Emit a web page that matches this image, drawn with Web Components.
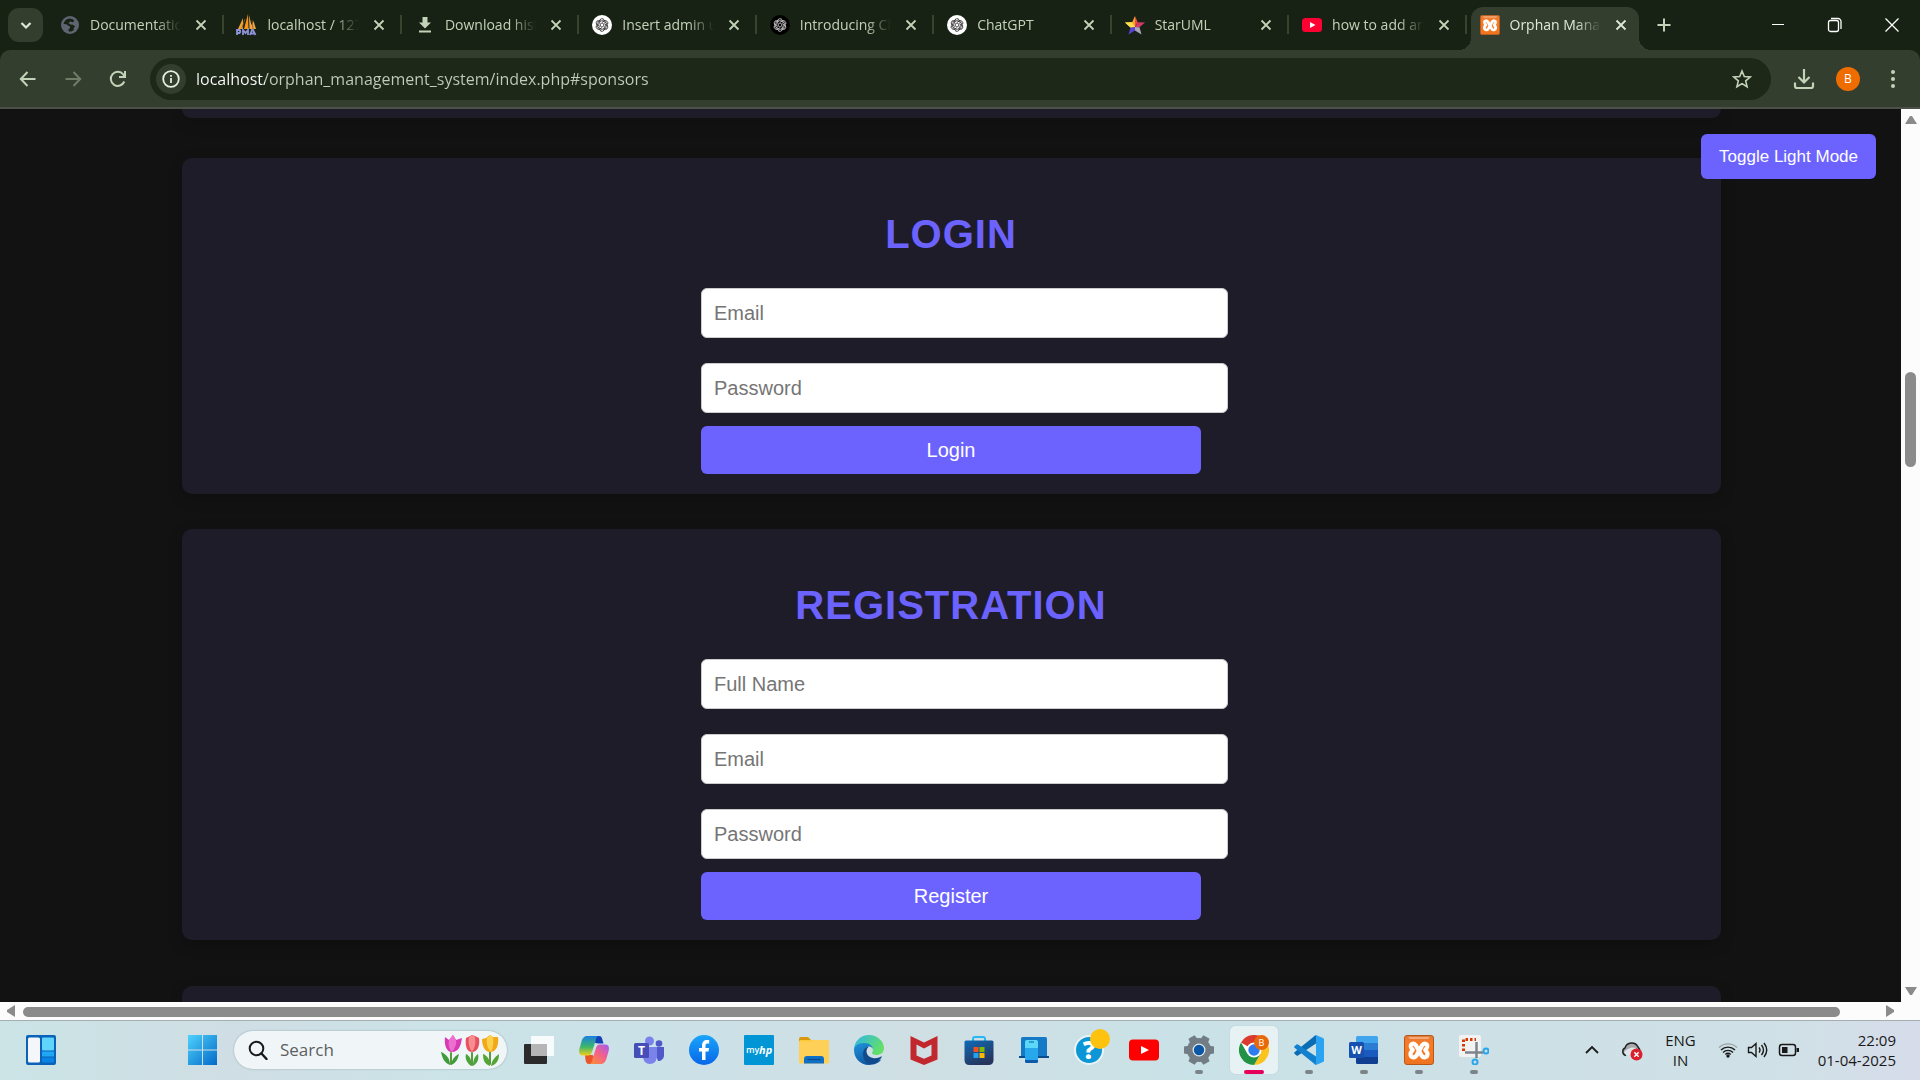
<!DOCTYPE html>
<html lang="en">
<head>
<meta charset="utf-8">
<title>Orphan Management System</title>
<style>
html, body { margin: 0; height: 100%; overflow: hidden; }
body { display: flex; flex-direction: column; background: #121212; font-family: "Open Sans", "Noto Sans", sans-serif; }
</style>
</head>
<body>
<tab-strip>
  <browser-tab icon="globe">Documentation</browser-tab>
  <browser-tab icon="pma">localhost / 127.0.0.1</browser-tab>
  <browser-tab icon="dlfile">Download history</browser-tab>
  <browser-tab icon="gpt">Insert admin user</browser-tab>
  <browser-tab icon="gptdark">Introducing ChatGPT</browser-tab>
  <browser-tab icon="gpt">ChatGPT</browser-tab>
  <browser-tab icon="star">StarUML</browser-tab>
  <browser-tab icon="yt">how to add an image</browser-tab>
  <browser-tab icon="xampp" active>Orphan Management</browser-tab>
</tab-strip>
<browser-toolbar></browser-toolbar>
<page-view>
  <form-card class="above"></form-card>
  <form-card heading="Login" action="Login" fields="Email,Password"></form-card>
  <form-card heading="Registration" action="Register" fields="Full Name,Email,Password"></form-card>
  <form-card class="below"></form-card>
</page-view>
<task-bar>
  <task-app slot="start" icon="widgets" name="Widgets"></task-app>
  <task-app slot="menu" icon="win" name="Start"></task-app>
  <task-app icon="taskview" name="Task view"></task-app>
  <task-app icon="copilot" name="Copilot"></task-app>
  <task-app icon="teams" name="Teams"></task-app>
  <task-app icon="facebook" name="Facebook"></task-app>
  <task-app icon="myhp" name="myHP"></task-app>
  <task-app icon="folder" name="File Explorer"></task-app>
  <task-app icon="edge" name="Edge"></task-app>
  <task-app icon="mcafee" name="McAfee"></task-app>
  <task-app icon="store" name="Store"></task-app>
  <task-app icon="phone" name="Phone Link"></task-app>
  <task-app icon="help" name="Support"></task-app>
  <task-app icon="ytbig" name="YouTube"></task-app>
  <task-app icon="gear" name="Settings" running></task-app>
  <task-app icon="chrome" name="Chrome" running current></task-app>
  <task-app icon="vscode" name="VS Code" running></task-app>
  <task-app icon="word" name="Word" running></task-app>
  <task-app icon="xamppbig" name="XAMPP" running></task-app>
  <task-app icon="snip" name="Snipping Tool" running></task-app>
</task-bar>
<script>
const gptMark = (stroke) => {
  let s = '';
  for (let i = 0; i < 6; i++) s += `<path transform="rotate(${i * 60} 10 10)" d="M7.6 8.7V6.2a2.5 2.5 0 0 1 4.6-1.4M7.6 6.9l3.5-2 2.6 1.5" />`;
  return `<g fill="none" stroke="${stroke}" stroke-width=".65">${s}<path d="M10 8l1.8 1v2L10 12l-1.8-1V9z"/></g>`;
};
const xampp = `<defs><linearGradient id="xg" x2="0" y2="1"><stop stop-color="#e07a3a"/><stop offset=".3" stop-color="#fb7a24"/><stop offset="1" stop-color="#ef7420"/></linearGradient></defs>
<rect x=".5" y=".5" width="29" height="29" rx="2.500" fill="url(#xg)" stroke="#b5581a"/><path d="M4 2h22l-2 2H6z" fill="#f9c9a4" opacity=".6"/>
<g fill="none" stroke="#fff" stroke-width="4.200" stroke-linecap="round" stroke-linejoin="round"><path d="M12 10.500C10 7.500 6.500 8.500 6.800 11.500c.2 1.500 1 2.300 2 3.500-1 1.200-2.300 2-2.300 4 0 3.500 4 4.500 6 1.500L18 10.500c2-3 5.500-2 5.200 1-.2 1.500-1 2.300-2 3.500 1 1.200 2.300 2 2.300 4 0 3.500-4 4.500-6 1.500z"/></g>`;
const ICONS = {
  globe: [20, 20, `<circle cx="10" cy="10" r="9" fill="#5f6470"/><path d="M9.500 3.500c-3 .3-5.500 2.500-6 5.500l3 .3 2.200 1.700c1.500 0 1.500 1 1.300 2.200l-1.600 1 .4 2.300c2 .3 3.400-.3 4.800-1.300l.2-2.400 1.300-1.500-2.300-1.500-2.500-.2-1.800-1.500 1.800-1.500 2.700.6 1.300-1.300-1.300-1.700z" fill="#182214"/>`],
  pma: [22, 22, `<path d="M7 4L2 15h5z" fill="#f0a030"/><path d="M12 0L8 15h4.500z" fill="#f7941d"/><path d="M13 1l.5 14H20L17.500 7l-2 4z" fill="#f2a541"/><path d="M9 5L6 14M16 6l1 9" stroke="#7c5a2a" stroke-width=".8"/><path d="M1 21v-5h2.500q1.500 1.500 0 3H1.500M7 21v-5l2.500 3 2.500-3v5M14 21l2-5 1 0 2.500 5M15 19.500h4" fill="none" stroke="#8c93d8" stroke-width="1.800"/>`],
  dlfile: [20, 20, `<path d="M7.500 2h5v5.500H16L10 13.500 4 7.500h3.500zM4 15.500h12v2H4z" fill="#c2d3b8"/>`],
  gpt: [20, 20, `<circle cx="10" cy="10" r="10" fill="#fff"/>${gptMark('#000')}`],
  gptdark: [20, 20, `<circle cx="10" cy="10" r="10" fill="#000"/>${gptMark('#fff')}`],
  star: [20, 20, `<path d="M10 1L7.300 7.200 0 7.500l5.500 5z" fill="#ffd43b"/><path d="M10 1v11L5.500 12.500 7.300 7.200z" fill="#f5a623"/><path d="M10 1l2.700 6.200L10 12z" fill="#ef4a4a"/><path d="M12.700 7.200l7.300.3-5.500 4.800L10 12z" fill="#d13a68"/><path d="M5.500 12.500L3.500 19.500 10 15.500V12z" fill="#5b3fd6"/><path d="M10 12v3.500l6.500 4-2-7.200z" fill="#a9a6b8"/><path d="M0 7.500l7-.3L10 12l-4.500.5z" fill="#ffdf4d"/>`],
  yt: [20, 20, `<rect y="3" width="20" height="14" rx="3.500" fill="#ff0033"/><path d="M8 7l5.500 3L8 13z" fill="#fff"/>`],
  xampp: [20, 20, `<g transform="scale(.667)">${xampp}</g>`],
  close: [14, 14, `<path d="M2.500 2.500l9 9M11.500 2.500l-9 9" stroke="currentColor" stroke-width="1.800"/>`],
  chevron: [14, 14, `<path d="M2.500 5l4.500 4.500L11.500 5" fill="none" stroke="currentColor" stroke-width="2.200"/>`],
  plus: [16, 16, `<path d="M8 1.500v13M1.500 8h13" stroke="currentColor" stroke-width="2"/>`],
  min: [14, 14, `<path d="M1 6.500h12" stroke="currentColor"/>`],
  restore: [16, 16, `<rect x="1.500" y="3.500" width="10" height="11" rx="2" fill="none" stroke="currentColor" stroke-width="1.300"/><path d="M4 1.500h7a3 3 0 0 1 3 3V12" fill="none" stroke="currentColor" stroke-width="1.300"/>`],
  winclose: [16, 16, `<path d="M1.500 1.500l13 13M14.500 1.500l-13 13" stroke="currentColor" stroke-width="1.300"/>`],
  back: [20, 20, `<path d="M17.500 10H3M9.500 3L2.800 10l6.700 7" fill="none" stroke="currentColor" stroke-width="2"/>`],
  forward: [20, 20, `<path d="M2.500 10H17M10.500 3l6.700 7-6.700 7" fill="none" stroke="currentColor" stroke-width="2"/>`],
  reload: [20, 20, `<path d="M16.300 12.500A7 7 0 1 1 15.300 5.500L17 7.300" fill="none" stroke="currentColor" stroke-width="2"/><path d="M17 2v6h-6" fill="none" stroke="currentColor" stroke-width="2"/>`],
  info: [20, 20, `<circle cx="10" cy="10" r="7.800" fill="none" stroke="currentColor" stroke-width="1.800"/><path d="M10 9v5M10 6v1.800" stroke="currentColor" stroke-width="1.800"/>`],
  fav: [20, 20, `<path d="M10 2l2.300 5.500 5.900.5-4.500 3.900 1.400 5.800L10 14.600l-5.100 3.100 1.400-5.800L1.800 8l5.900-.5z" fill="none" stroke="currentColor" stroke-width="1.600"/>`],
  download: [22, 22, `<path d="M11 1v13M5.500 9l5.500 5.500L16.500 9M2 14.500V18a2 2 0 0 0 2 2h14a2 2 0 0 0 2-2v-3.500" fill="none" stroke="currentColor" stroke-width="2.200"/>`],
  dots: [20, 20, `<g fill="currentColor"><circle cx="10" cy="3" r="2"/><circle cx="10" cy="10" r="2"/><circle cx="10" cy="17" r="2"/></g>`],
  widgets: [30, 30, `<rect width="30" height="30" rx="2" fill="#0a63b8"/><rect x="2" y="2.500" width="12" height="25" rx="1.500" fill="#f4f6f9"/><rect x="16" y="2.500" width="12" height="13" rx="1" fill="#60d5fb"/><rect x="16" y="16.500" width="12" height="5" fill="#1fa6f5"/><rect x="16" y="22.500" width="12" height="5" rx="1" fill="#0a84e4"/>`],
  win: [30, 30, `<defs><linearGradient id="w" gradientUnits="userSpaceOnUse" x2="30" y2="30"><stop stop-color="#4fd4fc"/><stop offset="1" stop-color="#0369c9"/></linearGradient></defs><path d="M1 0h14v14.500H1zM16 0h14v14.500H16zM1 15.500h14V30H1zM16 15.500h14V30H16z" fill="url(#w)"/>`],
  search: [20, 20, `<circle cx="8.500" cy="8.500" r="6.800" fill="none" stroke="currentColor" stroke-width="2"/><path d="M13.500 13.500l5 5.500" stroke="currentColor" stroke-width="2.400" stroke-linecap="round"/>`],
  tulips: [60, 32, `<g fill="none" stroke-linecap="round"><path d="M11 19v11M32 19v12M50 18v12" stroke="#5b9a3a" stroke-width="2"/></g>
   <path d="M10 31C4 29 2 23 1 18c5 2 9 6 9 13zM11 31c1-6 4-9 8-11-1 5-3 9-8 11z" fill="#3f9a3c"/><path d="M31 32c-5-4-6-8-5-12 4 2 6 6 5 12zM33 32c0-6 2-10 5-12 1 5 0 9-5 12z" fill="#4ca33c"/><path d="M50 32c-6-2-7-7-7-12 5 2 7 6 7 12zM51 32c1-6 4-9 8-12 0 6-2 10-8 12z" fill="#55a436"/>
   <path d="M5 3l4 3 4-5 3 5 6-2c-1 7-3 14-10 14C6 18 4 10 5 3z" fill="#d63bb4"/><path d="M9 6c-1 5 0 9 3 12 3-4 5-8 4-12l-3-5z" fill="#ee6fd0"/>
   <path d="M26 4l4-2 2-1 3 1 4 2c1 7-1 14-7 14s-7-8-6-14z" fill="#e8505f"/><path d="M29 3c-1 6 0 11 3 15 3-4 4-9 3-15l-3-2z" fill="#f68d8f"/>
   <path d="M42 5l4-1 4-3 3 2 5 0c1 7-1 15-8 15-5 0-8-6-8-13z" fill="#f2a917"/><path d="M47 4c-1 6 1 11 4 14 2-4 3-10 2-15l-3-2z" fill="#fcd04f"/>`],
  taskview: [30, 30, `<rect y="9" width="23" height="20" rx="1" fill="#2b2b2b"/><rect x="7" y="1" width="23" height="20" rx="1" fill="#fff" opacity=".85"/><rect x="7" y="9" width="16" height="12" fill="#b5b5b5"/>`],
  copilot: [30, 30, `<defs><linearGradient id="c1" x2="0" y2="1"><stop stop-color="#1b7fe0"/><stop offset=".55" stop-color="#3cb66a"/><stop offset="1" stop-color="#f1d01c"/></linearGradient><linearGradient id="c2" x1="1" x2=".2" y2="1"><stop stop-color="#a05cf5"/><stop offset=".5" stop-color="#f2608c"/><stop offset="1" stop-color="#fb8a3c"/></linearGradient></defs>
   <path d="M17 1h3c2.500 0 3 2 3.500 4l1 3.500h-5c-3 0-4-1-5-4z" fill="#1640b8"/><path d="M14 29h-4c-2.500 0-3-2-3.500-4L6 20h6c3 0 3 2 3.500 5z" fill="#e8562a"/>
   <path d="M20 1c-2.500 0-3 3-3.500 5L13 17c-.8 2.500-2 3.500-4 3.500H4c-4 0-4.500-3-3.500-7l2-7C3.500 3 5 1 9 1z" fill="url(#c1)"/><path d="M10 29c2.500 0 3-3 3.500-5L17 13c.8-2.500 2-3.500 4-3.500h5c4 0 4.500 3 3.500 7l-2 7c-1 3.500-2.500 5.500-6.500 5.500z" fill="url(#c2)"/>`],
  teams: [30, 30, `<circle cx="25" cy="8.500" r="3.300" fill="#5059c9"/><path d="M19 12h11v8c0 4-3 6-6 6z" fill="#5059c9"/><circle cx="15.500" cy="6" r="4.500" fill="#7b83eb"/><path d="M10 12h13v9c0 5-3 8-7 8s-7-3-7-8z" fill="#7b83eb"/><rect y="8" width="15" height="15" rx="1.500" fill="#464eb8"/><text x="7.500" y="20" text-anchor="middle" font-family="Open Sans" font-weight="700" font-size="12" fill="#fff">T</text>`],
  facebook: [30, 30, `<defs><linearGradient id="f" x2="0" y2="1"><stop stop-color="#19a5fb"/><stop offset="1" stop-color="#0866e8"/></linearGradient></defs><circle cx="15" cy="15" r="15" fill="url(#f)"/><path d="M13 25v-8.500h-3V13h3v-2.500c0-3.500 2-5.500 5-5.500h2.200v3.500h-2c-1.200 0-1.700.8-1.700 2V13h3.600l-.6 3.500h-3V25z" fill="#fff"/>`],
  myhp: [30, 30, `<rect width="30" height="30" rx="1" fill="#0096d6"/><text x="2" y="18" font-family="Open Sans" font-weight="600" font-size="9" fill="#fff">my</text><text x="15" y="19" font-family="Open Sans" font-weight="700" font-style="italic" font-size="11" fill="#fff">hp</text>`],
  folder: [30, 30, `<path d="M0 4q0-2 2-2h7l4 4v4H0z" fill="#d9970a"/><rect y="5" width="30" height="23" rx="1.500" fill="#ffc93c"/><path d="M0 8q0-1.500 1.500-1.500H12L14 5h14.500Q30 5 30 6.500V27q0 1.500-1.500 1.500h-27Q0 28.500 0 27z" fill="#fed057"/><path d="M5 28.500V24q0-3 3-3h14q3 0 3 3v4.500z" fill="#0f6fc4"/><path d="M8.500 24.500h13" stroke="#0a4a8a" stroke-width="1.200"/>`],
  edge: [30, 30, `<defs><linearGradient id="e1" y1="0" y2=".5"><stop stop-color="#2fb4ea"/><stop offset="1" stop-color="#62e067"/></linearGradient><linearGradient id="e2" x2=".6" y2="1"><stop stop-color="#1f96dc"/><stop offset="1" stop-color="#0c4f9c"/></linearGradient></defs>
   <path d="M0 15C0 6 7 0 15 0s15 6 15 13c0 5-4 7-7.500 7-2.500 0-4.500-1-4.500-2 0-.7 1-1.200 1-3 0-3-3-5-6-5C6 10 0 15 0 15z" fill="url(#e1)"/><path d="M0 15c0-4 4-7 10-7 6 0 9 3.500 9 7 0-2-2-3.500-4-3.500-5 0-7 10 3 14 4 1.200 8-.5 9.500-1.200C25 28 20 30 15 30 6 30 0 23 0 15z" fill="url(#e2)"/><path d="M9 19c0-4 3-7.500 6-7.500-4 3-3.500 10 4 11.500 3 .6 6-.3 8-1.500.8-.3 1 .3.500 1C25 26 21 29 17 29c-5 0-8-5-8-10z" fill="#114a8b"/>`],
  mcafee: [30, 30, `<path d="M1.500 1L15 7.500 28.500 1v23.500L15 30 1.500 24.500zM7.500 9.500v11L15 23.800l7.500-3.300v-11L15 13.500z" fill="#c1282d" fill-rule="evenodd"/>`],
  store: [30, 30, `<defs><linearGradient id="s" x2=".5" y2="1"><stop stop-color="#0f6bb8"/><stop offset="1" stop-color="#26355e"/></linearGradient></defs><path d="M9 8V4q0-2 2-2h8q2 0 2 2v4" fill="none" stroke="#29b7f2" stroke-width="2"/><path d="M.5 7q0-1.500 1.500-1.500h26q1.500 0 1.500 1.500v18q0 5-5 5h-19q-5 0-5-5z" fill="url(#s)"/><path d="M9.500 12h5v5h-5z" fill="#f25022"/><path d="M15.500 12h5v5h-5z" fill="#7fba00"/><path d="M9.500 18h5v5h-5z" fill="#1ea4ef"/><path d="M15.500 18h5v5h-5z" fill="#ffb900"/>`],
  phone: [30, 30, `<rect x="2" y="2" width="26" height="20" rx="1.500" fill="#157ac6"/><path d="M0 21h30v2H0z" fill="#0a4d8c"/><rect x="6" y="5" width="13" height="23" rx="1.500" fill="#0f5aa8"/><path d="M6 6.500Q6 5 7.500 5h10Q19 5 19 6.500V15H6z" fill="#5bd7f8"/><path d="M6 13h13v12H6z" fill="#28a8ec"/><path d="M10 7h5" stroke="#0f5aa8"/>`],
  help: [36, 36, `<circle cx="15" cy="21" r="15" fill="#e9f3f7"/><circle cx="15" cy="21" r="13" fill="#0d96d6"/><text x="15" y="30" text-anchor="middle" font-family="Open Sans" font-weight="800" font-size="25" fill="#fff">?</text><circle cx="26" cy="10" r="10" fill="#ffc20e"/>`],
  ytbig: [30, 30, `<rect y="4.500" width="30" height="21" rx="4" fill="#f00"/><path d="M12 11l8 4-8 4z" fill="#fff"/>`],
  gear: [30, 30, `<g transform="translate(15 15)" fill="#727c85">${[0, 60, 120, 180, 240, 300].map(a => `<path transform="rotate(${a + 30})" d="M-4.500-9L-3.500-15h7l1 6z"/>`).join('')}<circle r="12"/></g><circle cx="15" cy="15" r="6.500" fill="#dfe6ea"/><circle cx="15" cy="15" r="5.200" fill="#0c57a5"/>`],
  chrome: [30, 30, `<circle cx="15" cy="15" r="15" fill="#fff"/><path d="M15 15L2 7.500A15 15 0 0 1 28 7.500H15z" fill="#db3a2f"/><path d="M15 7.500h13A15 15 0 0 1 15 30l6.500-11.200z" fill="#fcc31e"/><path d="M2 7.500A15 15 0 0 0 15 30l6.500-11.200-13 0z" fill="#229344"/><circle cx="15" cy="15" r="7.500" fill="#fff"/><circle cx="15" cy="15" r="5.700" fill="#2f7bf0"/><circle cx="22.500" cy="7.500" r="7.500" fill="#e8690b"/><text x="22.500" y="11" text-anchor="middle" font-family="Open Sans" font-size="9" fill="#fff">B</text>`],
  vscode: [30, 30, `<path d="M22 30L1 12.500 0 12v1.500L1.500 15 22 23z" fill="none"/><path d="M22 0v8.500L4 20.500q-.8.500-1.500 0L.5 18.700q-.7-.7 0-1.400L20.500 1z" fill="#0a6cb5"/><path d="M22 30v-8.500L4 9.500q-.8-.5-1.500 0L.5 11.300q-.7.700 0 1.400L20.500 29z" fill="#1180ce"/><path d="M22 0l7 3q1 .5 1 1.500v21q0 1-1 1.500l-7 3c-.8 0-1.500-.5-1.500-1 1 .5 1.500 0 1.500-1V2c0-1-.5-1.500-1.500-1 0-.5.700-1 1.500-1z" fill="#2aa4f2"/>`],
  word: [30, 30, `<path d="M7 2.500Q7 1 8.500 1h19Q29 1 29 2.500V8H7z" fill="#41a5ee"/><path d="M7 8h22v7H7z" fill="#2b7cd3"/><path d="M7 15h22v7H7z" fill="#185abd"/><path d="M7 22h22v5.500q0 1.500-1.500 1.500h-19Q7 29 7 27.500z" fill="#103f91"/><rect y="7" width="15" height="16" rx="1.500" fill="#1850b0"/><text x="7.500" y="19" text-anchor="middle" font-family="Open Sans" font-weight="700" font-size="11" fill="#fff">W</text>`],
  xamppbig: [30, 30, xampp],
  snip: [30, 30, `<rect width="22" height="22" rx="2" fill="#f2f2f3"/><path d="M4.500 16V4.500H17" fill="none" stroke="#d83b01" stroke-width="3" stroke-dasharray="2.500 2"/><path d="M17.500 7v16M6 17.500h18" stroke="#7d858c" stroke-width="2.500"/><circle cx="27" cy="16" r="2.500" fill="none" stroke="#2aa6e8" stroke-width="2"/><circle cx="16" cy="27" r="2.500" fill="none" stroke="#2aa6e8" stroke-width="2"/>`],
  up: [14, 14, `<path d="M1 10l6-6 6 6" fill="none" stroke="currentColor" stroke-width="1.800"/>`],
  cloud: [22, 22, `<path d="M5 16.500a4 4 0 0 1-1-7.500A7 7 0 0 1 17 8l2 3" fill="#a7a9aa" stroke="#222" stroke-width="1.500"/><path d="M3 13q6-6 12-4l-4 7H5z" fill="#dfe5e8"/><circle cx="15.500" cy="15.500" r="6" fill="#d9202c"/><path d="M13.300 13.300l4.400 4.400M17.700 13.300l-4.400 4.400" stroke="#fff" stroke-width="1.400"/>`],
  wifi: [20, 20, `<g fill="none" stroke="currentColor" stroke-width="1.400"><path d="M1 7.500a13 13 0 0 1 18 0" opacity=".3"/><path d="M3 10a10 10 0 0 1 14 0M5 12.500a7 7 0 0 1 10 0M7.300 14.500a4 4 0 0 1 5.400 0"/></g><circle cx="10" cy="16" r="1.700" fill="currentColor"/>`],
  sound: [22, 20, `<g fill="none" stroke="currentColor" stroke-width="1.400"><path d="M1.500 7.500h3L9 3.500v13l-4.500-4h-3zM12 7.500q2 2.500 0 5M14.500 5q4 5 0 10M17 3q5.500 7 0 14"/></g>`],
  battery: [22, 20, `<rect x="1.500" y="4.500" width="16" height="11" rx="2.500" fill="none" stroke="currentColor" stroke-width="1.500"/><path d="M4 7h5.500v6H4zM18.500 8H21v4h-2.500z" fill="currentColor"/>`]
};

class Base extends HTMLElement {
  connectedCallback() {
    if (this.shadowRoot) return;
    this.attachShadow({ mode: 'open' }).innerHTML = this.view();
  }
}
const RESET = `*{box-sizing:border-box} button{border:0;padding:0;background:none;color:inherit;font:inherit;display:flex;align-items:center;justify-content:center} input{border:0;outline:0;min-width:0}`;

customElements.define('app-icon', class extends Base {
  view() {
    const [w, h, body] = ICONS[this.getAttribute('name')];
    return `<style>:host{display:block;flex:none;width:${w}px;height:${h}px}svg{display:block}</style><svg width="${w}" height="${h}" viewBox="0 0 ${w} ${h}" aria-hidden="true">${body}</svg>`;
  }
});

customElements.define('browser-tab', class extends Base {
  view() {
    return `<style>${RESET}
    :host{position:relative;display:flex;flex:1 1 0;min-width:0;height:50px;align-items:center;gap:10px;padding:0 13px;box-sizing:border-box;font-size:14px;line-height:20px;color:#c2d3b8}
    :host::after{content:"";position:absolute;right:0;top:15px;width:2px;height:19px;background:#37442f}
    .fav{width:20px;display:flex;justify-content:center}
    .t{flex:1;min-width:0;overflow:hidden;white-space:nowrap;-webkit-mask:linear-gradient(90deg,#000 72%,transparent);mask:linear-gradient(90deg,#000 72%,transparent)}
    .x{width:20px;height:20px}
    .bg{display:none}
    :host([active]){color:#e1e8da}
    :host([active])::after{display:none}
    :host([active]) .bg{display:block;position:absolute;z-index:-1;left:4px;right:5px;top:7px;bottom:0;background:#333e2e;border-radius:12px 12px 0 0}
    .bg::before,.bg::after{content:"";position:absolute;bottom:0;width:12px;height:12px}
    .bg::before{right:100%;background:radial-gradient(circle at 0 0,transparent 12px,#333e2e 12px)}
    .bg::after{left:100%;background:radial-gradient(circle at 100% 0,transparent 12px,#333e2e 12px)}
    </style><span class="bg"></span><span class="fav"><app-icon name="${this.getAttribute('icon')}"></app-icon></span><span class="t"><slot></slot></span><button class="x" aria-label="Close tab"><app-icon name="close"></app-icon></button>`;
  }
});

customElements.define('tab-strip', class extends Base {
  view() {
    return `<style>${RESET}
    :host{display:flex;flex:none;align-items:center;height:50px;background:#182214;color:#fff}
    .find{width:35px;height:34px;margin:0 4px 0 8px;border-radius:11px;background:#333e2e;color:#dfe8d8;flex:none}
    .tabs{display:flex;flex:1;min-width:0;position:relative;z-index:0}
    .new{width:40px;height:34px;color:#c2d3b8}
    .win{display:flex;margin-left:65px}.win button{width:57px;height:50px}
    </style><button class="find" aria-label="Search tabs"><app-icon name="chevron"></app-icon></button>
    <div class="tabs"><slot></slot></div><button class="new" aria-label="New tab"><app-icon name="plus"></app-icon></button>
    <div class="win"><button aria-label="Minimize"><app-icon name="min"></app-icon></button><button aria-label="Restore"><app-icon name="restore"></app-icon></button><button aria-label="Close"><app-icon name="winclose"></app-icon></button></div>`;
  }
});

customElements.define('browser-toolbar', class extends Base {
  view() {
    return `<style>${RESET}
    :host{display:block;flex:none;background:#182214}
    .bar{display:flex;align-items:center;height:59px;padding:0 5px;background:#333e2e;border-bottom:2px solid #4b5148;border-radius:10px 10px 0 0;color:#c2d3b8}
    .nav{width:45px;height:42px}.off{color:#6f7c68}
    .omni{flex:1;display:flex;align-items:center;gap:10px;height:42px;margin:0 10px;padding:0 19px 0 6px;border-radius:21px;background:#1e2819}
    .info{width:30px;height:30px;border-radius:15px;background:#333e2e;color:#e8eee2}
    .url{flex:1;height:30px;padding:0;font:16px/30px "Open Sans","Noto Sans",sans-serif;color:transparent;background:linear-gradient(90deg,#fff 69px,#c3cbbb 69px);-webkit-background-clip:text;background-clip:text}
    .me{width:24px;height:24px;border-radius:50%;background:#ef6c00;color:#fff;font-size:12px;margin:0 10px}
    </style><div class="bar"><button class="nav" aria-label="Back"><app-icon name="back"></app-icon></button><button class="nav off" aria-label="Forward"><app-icon name="forward"></app-icon></button><button class="nav" aria-label="Reload"><app-icon name="reload"></app-icon></button>
    <div class="omni"><button class="info" aria-label="Site information"><app-icon name="info"></app-icon></button><input class="url" type="text" aria-label="Address" value="localhost/orphan_management_system/index.php#sponsors"><button aria-label="Bookmark"><app-icon name="fav"></app-icon></button></div>
    <button class="nav" aria-label="Downloads"><app-icon name="download"></app-icon></button><button class="me" aria-label="Profile">B</button><button class="nav" aria-label="Menu"><app-icon name="dots"></app-icon></button></div>`;
  }
});

customElements.define('scroll-bar', class extends Base {
  view() {
    const [a, b, c] = this.getAttribute('spans').split(',');
    const tri = this.hasAttribute('horizontal')
      ? ['M9 1v12L1 8V6z', 'M0 1v12l8-5V6z', 9, 14, 'row', '0 6px', '5px 0 3px'] : ['M1 9h12L8 1H6z', 'M1 0h12L8 8H6z', 14, 9, 'column', '6px 0', '0 4px'];
    const svg = p => `<svg width="${tri[2]}" height="${tri[3]}" viewBox="0 0 ${tri[2]} ${tri[3]}"><path d="${p}" fill="#8b8b8b"/></svg>`;
    return `<style>:host{display:flex;flex-direction:${tri[4]};align-items:center;padding:${tri[5]};box-sizing:border-box;background:#fcfcfc;min-width:0;min-height:0}svg{flex:none;display:block}
    .track{flex:1;align-self:stretch;display:flex;flex-direction:${tri[4]};padding:${tri[6]};margin:${this.hasAttribute('horizontal') ? '0 8px' : '4px 0'}}
    .track div:nth-child(1){flex:${a} 0 0}.thumb{flex:${b} 0 0;border-radius:6px;background:#8b8b8b;min-width:10px}.track div:nth-child(3){flex:${c} 0 0}</style>${svg(tri[0])}<div class="track"><div></div><div class="thumb"></div><div></div></div>${svg(tri[1])}`;
  }
});

customElements.define('page-view', class extends Base {
  view() {
    return `<style>${RESET}
    :host{flex:1;min-height:0;display:grid;grid-template:minmax(0,1fr) 18px / minmax(0,1fr) 19px;background:#fcfcfc;font-family:"Liberation Sans",Arial,sans-serif}
    .doc{position:relative;overflow:hidden;display:flex;flex-direction:column;align-items:center;padding-left:1px;background:#121212}
    .mode{position:absolute;z-index:2;top:25px;right:25px;padding:13px 18px;border-radius:6px;background:#6c63ff;color:#fff;font-size:17px;line-height:19px}
    </style><div class="doc"><slot></slot><button class="mode">Toggle Light Mode</button></div><scroll-bar spans="244,95,516"></scroll-bar><scroll-bar horizontal spans="0,1817,38"></scroll-bar>`;
  }
});

customElements.define('form-card', class extends Base {
  view() {
    const style = `<style>${RESET}
    :host{display:block;box-sizing:border-box;flex:none;width:81%;margin-bottom:35px;padding:53px 20px 20px;border-radius:10px;background:#1f1c2a;box-shadow:0 5px 15px rgba(0,0,0,.2)}
    :host([heading="Registration"]){margin-bottom:46px}
    :host(.above){height:9px;padding:0;border-radius:0 0 10px 10px;margin-bottom:40px}
    :host(.below){flex:1;padding:0;margin:0;border-radius:10px 10px 0 0}
    h2{margin:0 0 31px;font-size:40px;line-height:46px;letter-spacing:1px;text-align:center;text-transform:uppercase;color:#6c63ff}
    form{display:flex;flex-direction:column;width:500px;margin:0 auto;font-size:20px}
    input{width:calc(100% + 27px);height:50px;margin-bottom:25px;padding:0 12px;border:1px solid #ccc;border-radius:6px;background:#fff;font:20px/24px "Liberation Sans",Arial,sans-serif}
    input::placeholder{color:#757575}
    input:last-of-type{margin-bottom:13px}
    button{height:48px;border-radius:6px;background:#6c63ff;color:#fff}
    </style>`;
    if (!this.hasAttribute('heading')) return style;
    const inputs = this.getAttribute('fields').split(',').map(f => `<input type="${f === 'Password' ? 'password' : f === 'Email' ? 'email' : 'text'}" placeholder="${f}" aria-label="${f}">`).join('');
    return `${style}<h2>${this.getAttribute('heading')}</h2><form>${inputs}<button type="button">${this.getAttribute('action')}</button></form>`;
  }
});

customElements.define('task-app', class extends Base {
  view() {
    return `<style>${RESET}
    :host{display:flex;flex:none;width:55px;justify-content:center}
    button{position:relative;width:48px;height:48px;border-radius:5px}
    :host([current]) button{background:rgba(255,255,255,.55);box-shadow:0 0 1px #9aa8ad}
    :host([running]) button::after{content:"";position:absolute;left:20px;bottom:0;width:8px;height:4px;border-radius:2px;background:#7b8487}
    :host([current]) button::after{left:14px;width:20px;background:#e6005c}
    :host([icon="help"]) app-icon{margin-bottom:6px;margin-left:6px}
    </style><button aria-label="${this.getAttribute('name')}"><app-icon name="${this.getAttribute('icon')}"></app-icon></button>`;
  }
});

customElements.define('task-bar', class extends Base {
  view() {
    return `<style>${RESET}
    :host{display:flex;flex:none;box-sizing:border-box;height:60px;align-items:center;padding:0 24px 2px 13px;border-top:1px solid #a5afb3;background:linear-gradient(90deg,#cbe4e6,#cfdee4 12%,#cbe3e7 24%,#cbe1e8 34%,#cfdfe4 48%,#c9e2e7 62%,#cde0e6 78%,#cfe1e6 92%,#d6dcea);color:#191919}
    .apps{display:flex;align-items:center;margin-left:106px}
    .search{display:flex;align-items:center;width:273px;height:38px;margin:0 4px 0 5px;padding:0 7px 0 14px;border-radius:19px;background:#f0f6f8;box-shadow:0 0 2px #8fa0a6}
    .search input{flex:1;margin-left:12px;padding:0;background:none;font:17px/24px "Open Sans","Noto Sans",sans-serif}
    .search input::placeholder{color:#5c5f61}
    .tray{display:flex;align-items:center;gap:22px;margin-left:auto;font-size:15px;line-height:20px}
    .lang{text-align:center}.clock{text-align:right;margin-left:-4px}.sys{display:flex;gap:9px}
    </style><slot name="start"></slot><div class="apps"><slot name="menu"></slot>
    <label class="search"><app-icon name="search"></app-icon><input type="text" placeholder="Search" aria-label="Search"><app-icon name="tulips"></app-icon></label><slot></slot></div>
    <div class="tray"><button aria-label="Hidden icons"><app-icon name="up"></app-icon></button><app-icon name="cloud"></app-icon><div class="lang">ENG<br>IN</div><div class="sys"><app-icon name="wifi"></app-icon><app-icon name="sound"></app-icon><app-icon name="battery"></app-icon></div><div class="clock">22:09<br>01-04-2025</div></div>`;
  }
});
</script>
</body>
</html>
